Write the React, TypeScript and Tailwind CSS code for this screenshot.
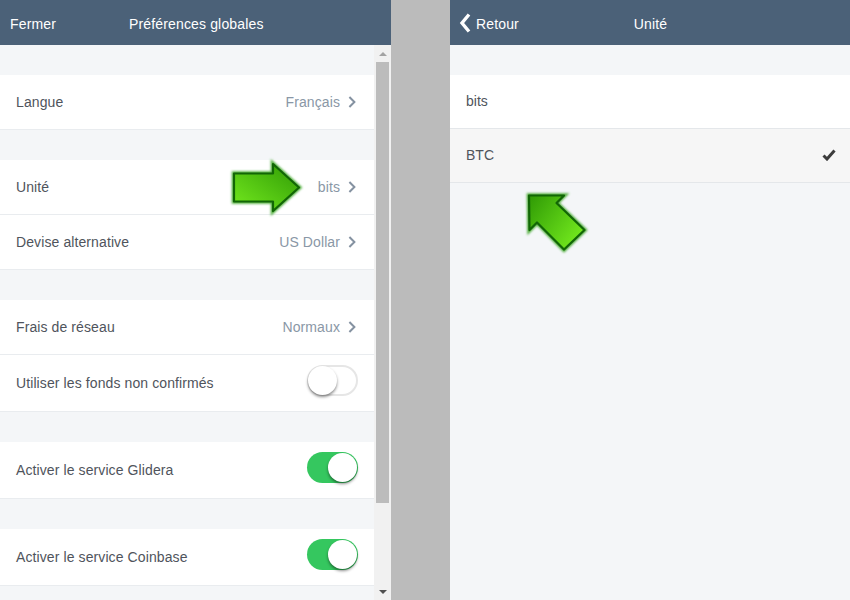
import React from 'react';

const Spacer = ({ h }: { h: string }) => <div className={h} />;

const Chevron = () => (
    <svg className="h-3 w-2 shrink-0 text-[#8592a1]" viewBox="0 0 8 12" fill="none">
        <path d="M1.4 1 L6.4 6 L1.4 11" stroke="currentColor" strokeWidth="2" />
    </svg>
);

const Row = ({ label, value, h = 'h-[55px]' }: { label: string; value?: string; h?: string }) => (
    <div className={`${h} flex items-center justify-between border-b border-[#e9ecef] bg-white pl-4 pr-[18px] text-[14px] tracking-[0.1px]`}>
        <span className="text-[#4f545c]">{label}</span>
        {value && (
            <span className="flex items-center gap-2 text-[#8a97a6]">
                {value}
                <Chevron />
            </span>
        )}
    </div>
);

const Toggle = ({ on }: { on: boolean }) => (
    <div className={`relative mb-1.5 h-[31px] w-[51px] rounded-full ${on ? 'bg-[#35c75f]' : 'border-2 border-[#e6e6e6] bg-white'}`}>
        <div
            className={`absolute h-[29px] w-[29px] rounded-full bg-white shadow-[0_2px_3px_rgba(0,0,0,0.45)] ${on ? 'right-px top-px' : '-left-px -top-px'}`}
        />
    </div>
);

const ToggleRow = ({ label, on, h = 'h-[57px]' }: { label: string; on: boolean; h?: string }) => (
    <div className={`${h} flex items-center justify-between border-b border-[#e9ecef] bg-white pl-4 pr-4 text-[14px] tracking-[0.1px]`}>
        <span className="text-[#4f545c]">{label}</span>
        <Toggle on={on} />
    </div>
);

// both arrows are drawn in page coordinates, they sit on top of the two panels
const Arrows = () => {
    const right = 'M234 173.5 H273 V164 L299 187.5 L273 211 V201.5 H234 Z';
    const upLeft = 'M529 195.5 H564 L556.5 203 L584.5 230 L564 249.5 L537 222.5 L529.5 230 Z';
    return (
        <svg className="pointer-events-none absolute left-0 top-0 h-[600px] w-[850px]" viewBox="0 0 850 600" fill="none">
            <defs>
                <linearGradient id="arrowRight" x1="0" y1="1" x2="1" y2="0">
                    <stop offset="0" stopColor="#74ea1e" />
                    <stop offset="1" stopColor="#2f9a05" />
                </linearGradient>
                <linearGradient id="arrowUp" x1="0" y1="0" x2="1" y2="0.7">
                    <stop offset="0" stopColor="#2f9a05" />
                    <stop offset="1" stopColor="#74ea1e" />
                </linearGradient>
                <filter id="glow" x="-20%" y="-20%" width="140%" height="140%">
                    <feGaussianBlur stdDeviation="1" />
                </filter>
            </defs>
            <path d={right} stroke="#4fae3a" strokeWidth="4.5" filter="url(#glow)" />
            <path d={right} fill="url(#arrowRight)" stroke="#126606" strokeWidth="2.2" strokeLinejoin="round" />
            <path d={upLeft} stroke="#4fae3a" strokeWidth="4.5" filter="url(#glow)" />
            <path d={upLeft} fill="url(#arrowUp)" stroke="#126606" strokeWidth="2.2" strokeLinejoin="round" />
        </svg>
    );
};

const Header = ({ children }: { children: React.ReactNode }) => (
    <div className="relative flex h-[45px] shrink-0 items-center bg-[#4b6178] pt-[3px] text-[14px] tracking-[0.15px] text-white">{children}</div>
);

export default function App() {
    return (
        <div className="relative flex h-[600px] w-[850px] overflow-hidden bg-[#bbbbbb] font-['Liberation_Sans',Arial,sans-serif]">
            <div className="flex w-[391px] shrink-0 flex-col">
                <Header>
                    <span className="pl-2.5">Fermer</span>
                    <span className="ml-[73px]">Préférences globales</span>
                </Header>
                <div className="flex flex-1 overflow-hidden bg-[#f4f6f8]">
                    <div className="flex-1">
                        <Spacer h="h-[30px]" />
                        <Row label="Langue" value="Français" />
                        <Spacer h="h-[30px]" />
                        <Row label="Unité" value="bits" />
                        <Row label="Devise alternative" value="US Dollar" />
                        <Spacer h="h-[30px]" />
                        <Row label="Frais de réseau" value="Normaux" />
                        <ToggleRow label="Utiliser les fonds non confirmés" on={false} />
                        <Spacer h="h-[30px]" />
                        <ToggleRow label="Activer le service Glidera" on />
                        <Spacer h="h-[30px]" />
                        <ToggleRow label="Activer le service Coinbase" on />
                    </div>
                    <div className="flex w-[17px] shrink-0 flex-col items-center bg-[#f1f1f1] px-0.5">
                        <div className="flex h-[17px] items-center justify-center">
                            <div className="h-0 w-0 border-x-[4px] border-b-[4px] border-x-transparent border-b-[#a3a3a3]" />
                        </div>
                        <div className="h-[441px] w-[13px] bg-[#bcbcbc]" />
                        <div className="flex-1" />
                        <div className="flex h-[17px] items-center justify-center">
                            <div className="h-0 w-0 border-x-[4px] border-t-[4px] border-x-transparent border-t-[#505050]" />
                        </div>
                    </div>
                </div>
            </div>

            <div className="ml-[59px] flex w-[400px] shrink-0 flex-col bg-[#f4f6f8]">
                <Header>
                    <svg className="ml-[9px] h-5 w-3 -translate-y-[1px]" viewBox="0 0 12 20" fill="none">
                        <path d="M10 1.5 L3 10 L10 18.5" stroke="#ffffff" strokeWidth="3.4" />
                    </svg>
                    <span className="ml-[5px]">Retour</span>
                    <span className="absolute left-px right-0 text-center">Unité</span>
                </Header>
                <Spacer h="h-[30px]" />
                <div className="flex h-[54px] items-center border-b border-[#e4e7ea] bg-white pl-4 text-[14px] text-[#4f545c]">bits</div>
                <div className="flex h-[54px] items-center justify-between border-b border-[#e4e7ea] bg-[#f6f6f6] pl-4 pr-3.5 text-[14px] text-[#4f545c]">
                    BTC
                    <svg className="mb-0.5 h-3 w-3.5" viewBox="0 0 14 12" fill="none">
                        <path d="M1.5 6.5 L5 10 L12.5 1.5" stroke="#3c3c3c" strokeWidth="3" />
                    </svg>
                </div>
            </div>

            <Arrows />
        </div>
    );
}
